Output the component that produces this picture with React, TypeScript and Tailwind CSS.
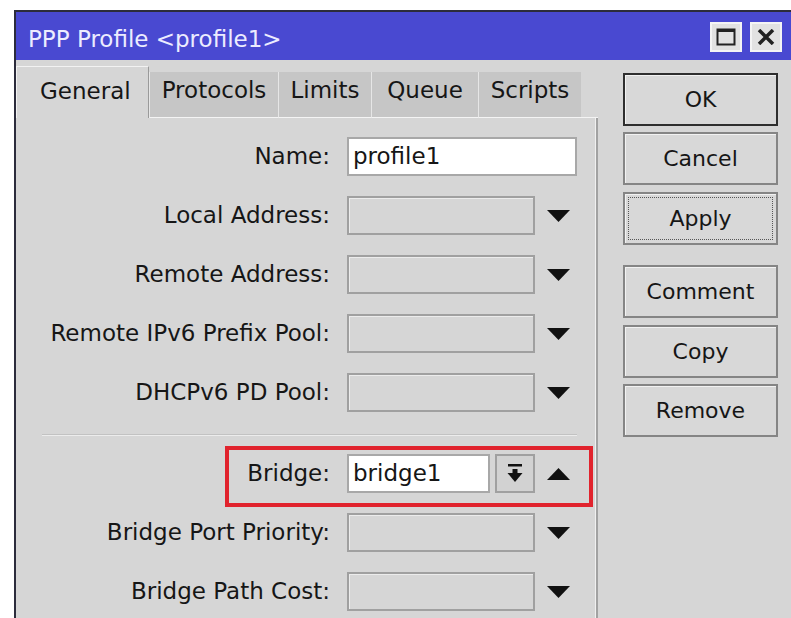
import React from "react";

const FONT = { fontFamily: '"DejaVu Sans", Verdana, sans-serif' };

const TABS = [
  { label: "Protocols", w: "w-[129px]" },
  { label: "Limits", w: "w-[93px]" },
  { label: "Queue", w: "w-[107px]" },
  { label: "Scripts", w: "w-[103px]" },
];

// small black triangles used by the combo fields
const DownArrow = () => (
  <svg width="23" height="12" viewBox="0 0 23 12" className="shrink-0">
    <polygon points="0,0 23,0 11.5,12" fill="#111" />
  </svg>
);

const UpArrow = () => (
  <svg width="23" height="12" viewBox="0 0 23 12" className="shrink-0">
    <polygon points="0,12 23,12 11.5,0" fill="#111" />
  </svg>
);

const Label = ({ children }: { children: React.ReactNode }) => (
  <div className="w-[314px] shrink-0 text-right text-[23px] leading-none text-[#161616] whitespace-nowrap">
    {children}
  </div>
);

const EmptyField = () => (
  <div className="ml-[17px] h-[39px] w-[188px] border-2 border-[#a0a0a0] shadow-[inset_1px_1px_0_#ececec]" />
);

const ComboRow = ({ label }: { label: string }) => (
  <div className="flex items-center">
    <Label>{label}</Label>
    <EmptyField />
    <div className="ml-[12px]">
      <DownArrow />
    </div>
  </div>
);

const SideButton = ({
  children,
  main,
  focused,
  className = "",
}: {
  children: React.ReactNode;
  main?: boolean;
  focused?: boolean;
  className?: string;
}) => (
  <div
    className={`relative flex h-[53px] w-[155px] items-center justify-center bg-[#d8d8d8] text-[22px] text-[#161616] shadow-[inset_1px_1px_0_#f2f2f2] border-2 ${
      main ? "border-[#2e2e2e]" : "border-[#858585]"
    } ${className}`}
  >
    {focused && <div className="absolute inset-[3px] border border-dotted border-[#555]" />}
    <span className="relative">{children}</span>
  </div>
);

export default function App() {
  return (
    <div className="h-[618px] w-[791px] overflow-hidden bg-white pl-[14px] pt-[10px]" style={FONT}>
      <div className="flex h-[640px] w-[777px] flex-col border-l-2 border-t-2 border-[#2c2c3c] bg-[#d6d6d6]">
        {/* title bar */}
        <div className="flex h-[48px] items-center justify-between bg-[#4949d1] pl-[12px] pr-[9px]">
          <span className="pt-[6px] text-[23px] leading-none text-[#ececff]">PPP Profile &lt;profile1&gt;</span>
          <div className="flex gap-[8px] pt-[2px]">
            <div className="flex h-[30px] w-[32px] items-center justify-center border-2 border-[#f4f4f4] bg-[#e2e2e2]">
              <svg width="20" height="18" viewBox="0 0 20 18">
                <rect x="1.5" y="1.5" width="17" height="15" fill="none" stroke="#222" strokeWidth="2" />
                <rect x="1.5" y="1.5" width="17" height="2.5" fill="#222" />
              </svg>
            </div>
            <div className="flex h-[30px] w-[32px] items-center justify-center border-2 border-[#f4f4f4] bg-[#e2e2e2]">
              <svg width="18" height="16" viewBox="0 0 18 16">
                <path d="M2 1 L16 15 M16 1 L2 15" stroke="#222" strokeWidth="3.5" />
              </svg>
            </div>
          </div>
        </div>

        <div className="flex">
          {/* tabs and form */}
          <div className="flex w-[582px] flex-col">
            <div className="flex h-[58px] items-end">
              <div className="h-[52px] w-[133px] border-l border-t border-[#f2f2f2] border-r-[#9a9a9a] border-r bg-[#d6d6d6] pl-[23px] pt-[10px] text-[23px] leading-[28px] text-[#161616]">
                General
              </div>
              {TABS.map((t) => (
                <div
                  key={t.label}
                  className={`${t.w} h-[46px] border-l border-b border-l-[#e6e6e6] border-b-[#f4f4f4] bg-[#c6c6c6] pt-[4px] text-center text-[23px] leading-[28px] text-[#161616]`}
                >
                  {t.label}
                </div>
              ))}
              <div className="h-[1px] flex-1 bg-[#f4f4f4]" />
            </div>

            <div className="flex h-[520px] flex-col border-r-2 border-r-[#a2a2a2] pt-[19px] shadow-[inset_-1px_0_0_#f0f0f0]">
              <div className="flex flex-col gap-[20px]">
                <div className="flex items-center">
                  <Label>Name:</Label>
                  <div className="ml-[17px] flex h-[39px] w-[230px] items-center border-2 border-[#a8a8a8] bg-white pl-[4px] text-[23px] text-[#161616]">
                    profile1
                  </div>
                </div>
                <ComboRow label="Local Address:" />
                <ComboRow label="Remote Address:" />
                <ComboRow label="Remote IPv6 Prefix Pool:" />
                <ComboRow label="DHCPv6 PD Pool:" />
              </div>

              <div className="ml-[26px] mt-[22px] w-[535px] border-t border-b border-t-[#c2c2c2] border-b-[#ececec]" />

              <div className="mt-[18px] flex flex-col gap-[20px]">
                <div className="relative flex items-center">
                  <Label>Bridge:</Label>
                  <div className="ml-[17px] flex h-[39px] w-[143px] items-center border-2 border-[#a8a8a8] bg-white pl-[4px] text-[23px] text-[#161616]">
                    bridge1
                  </div>
                  <div className="ml-[5px] flex h-[39px] w-[40px] items-center justify-center border-2 border-[#a0a0a0] bg-[#d2d2d2]">
                    <svg width="16" height="19" viewBox="0 0 16 19">
                      <rect x="1" y="0" width="14" height="2.5" fill="#111" />
                      <rect x="5.5" y="5" width="5" height="4" fill="#111" />
                      <polygon points="0.5,9 15.5,9 8,18" fill="#111" />
                    </svg>
                  </div>
                  <div className="ml-[12px]">
                    <UpArrow />
                  </div>
                  {/* highlight frame */}
                  <div className="pointer-events-none absolute left-[209px] top-[-8px] h-[61px] w-[368px] border-4 border-[#e1232d]" />
                </div>
                <ComboRow label="Bridge Port Priority:" />
                <ComboRow label="Bridge Path Cost:" />
              </div>
            </div>
          </div>

          {/* action buttons */}
          <div className="ml-[25px] flex flex-col pt-[13px]">
            <SideButton main>OK</SideButton>
            <SideButton className="mt-[6px]">Cancel</SideButton>
            <SideButton className="mt-[7px]" focused>
              Apply
            </SideButton>
            <SideButton className="mt-[20px]">Comment</SideButton>
            <SideButton className="mt-[7px]">Copy</SideButton>
            <SideButton className="mt-[6px]">Remove</SideButton>
          </div>
        </div>
      </div>
    </div>
  );
}
